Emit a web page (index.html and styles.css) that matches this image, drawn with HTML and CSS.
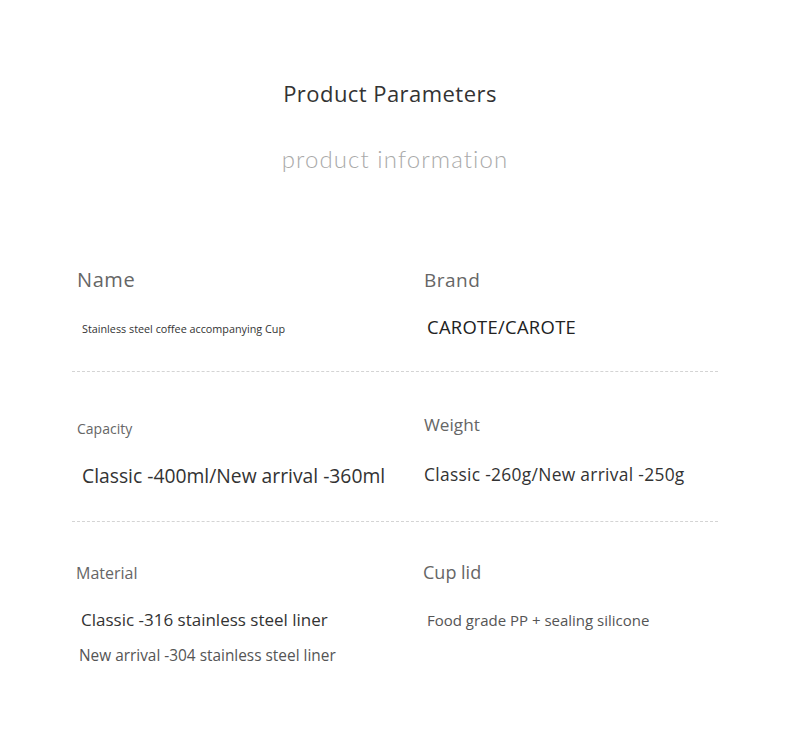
FILE: index.html
```html
<!DOCTYPE html>
<html>
<head>
<meta charset="utf-8">
<link rel="stylesheet" href="styles.css">
</head>
<body>
<div class="page">
  <header class="head">
    <h1 class="title">Product Parameters</h1>
    <div class="subtitle">product information</div>
  </header>
  <section class="params">
    <div class="row row-1">
      <div class="cell cell-left">
        <div class="label label-name">Name</div>
        <div class="value value-name">Stainless steel coffee accompanying Cup</div>
      </div>
      <div class="cell cell-right">
        <div class="label label-brand">Brand</div>
        <div class="value value-brand">CAROTE/CAROTE</div>
      </div>
    </div>
    <div class="row row-2">
      <div class="cell cell-left">
        <div class="label label-capacity">Capacity</div>
        <div class="value value-capacity">Classic -400ml/New arrival -360ml</div>
      </div>
      <div class="cell cell-right">
        <div class="label label-weight">Weight</div>
        <div class="value value-weight">Classic -260g/New arrival -250g</div>
      </div>
    </div>
    <div class="row row-3">
      <div class="cell cell-left">
        <div class="label label-material">Material</div>
        <div class="value value-material">Classic -316 stainless steel liner</div>
        <div class="value value-material2">New arrival -304 stainless steel liner</div>
      </div>
      <div class="cell cell-right">
        <div class="label label-lid">Cup lid</div>
        <div class="value value-lid">Food grade PP + sealing silicone</div>
      </div>
    </div>
  </section>
</div>
</body>
</html>
```
FILE: styles.css
```css
* { box-sizing: border-box; margin: 0; padding: 0; }
html, body { background: #fff; }
body {
  font-family: "Open Sans", "Noto Sans", sans-serif;
  color: #333;
  width: 790px;
  height: 740px;
  overflow: hidden;
}
.page { padding-top: 78px; }
.head { display: flex; flex-direction: column; align-items: center; }
.title {
  font-weight: 400;
  font-size: 22px;
  line-height: 30px;
  color: #333;
  letter-spacing: 0.45px;
  margin-left: -10px;
}
.subtitle {
  margin-top: 36px;
  margin-left: 0;
  font-family: "Lato", sans-serif;
  font-weight: 300;
  font-size: 24px;
  line-height: 30px;
  color: #aaaaaa;
  letter-spacing: 1.1px;
}
.params {
  margin: 92px 72px 0 72px;
  width: 646px;
}
.row {
  display: grid;
  grid-template-columns: 352px 294px;
  border-bottom: 1px dashed #d4d4d4;
}
.row-3 { border-bottom: none; }
.row-1 { height: 106px; }
.row-2 { height: 150px; }
.cell { display: flex; flex-direction: column; }
.cell-left { padding-left: 5px; }
.label { color: #666; }
.value { color: #333; }

.label-name { font-size: 20px; line-height: 24px; margin-top: 2px; letter-spacing: 0.6px; }
.value-name { font-size: 10.8px; line-height: 16px; margin-top: 29px; margin-left: 5px; }
.label-brand { font-size: 19px; line-height: 24px; margin-top: 2px; letter-spacing: 0.5px; }
.value-brand { font-size: 18.4px; line-height: 22px; margin-top: 24px; margin-left: 3px; color: #222; letter-spacing: 0.3px; }

.label-capacity { font-size: 14px; line-height: 20px; margin-top: 47px; }
.value-capacity { font-size: 19.3px; line-height: 24px; margin-top: 25px; margin-left: 5px; }
.label-weight { font-size: 17.2px; line-height: 20px; margin-top: 43px; }
.value-weight { font-size: 17.4px; line-height: 22px; margin-top: 28px; letter-spacing: 0.3px; }

.label-material { font-size: 16px; line-height: 20px; margin-top: 41px; margin-left: -1px; }
.value-material { font-size: 17px; line-height: 22px; margin-top: 26px; margin-left: 4px; }
.value-material2 { font-size: 15.4px; line-height: 20px; margin-top: 15px; margin-left: 2px; color: #555; }
.label-lid { font-size: 18px; line-height: 22px; margin-top: 39px; margin-left: -1px; }
.value-lid { font-size: 15px; line-height: 20px; margin-top: 27px; margin-left: 3px; color: #555; }
```
